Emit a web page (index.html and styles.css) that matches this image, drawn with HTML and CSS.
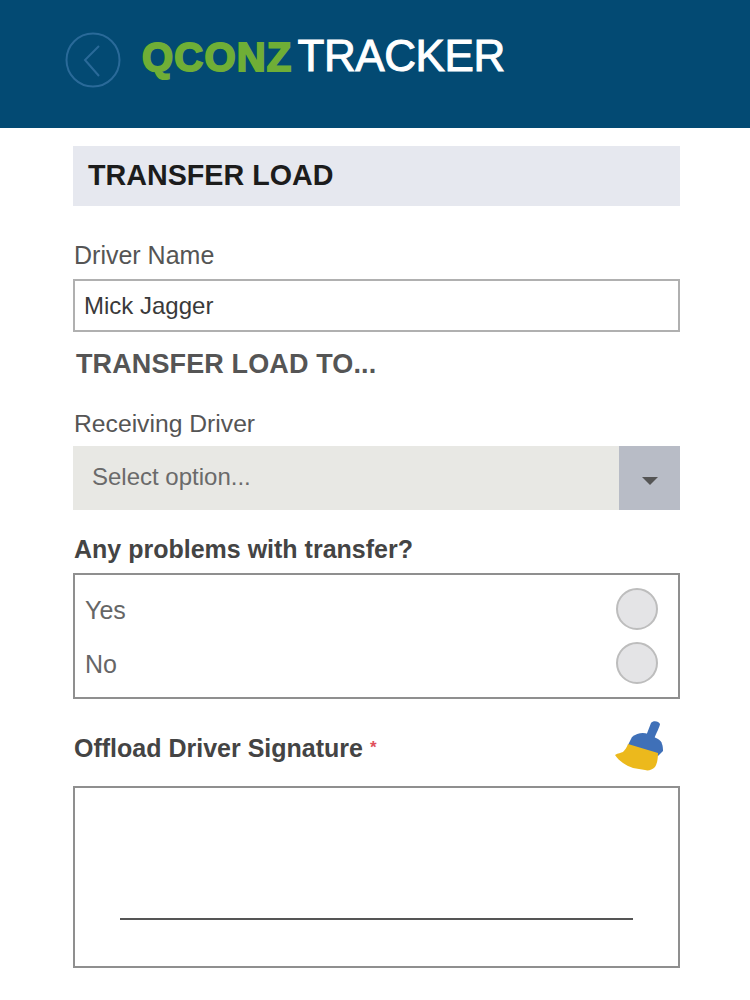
FILE: index.html
```html
<!DOCTYPE html>
<html lang="en">
<head>
    <meta charset="UTF-8">
    <meta name="viewport" content="width=device-width, initial-scale=1.0">
    <title>Transfer Load</title>
    <link rel="stylesheet" href="styles.css">
</head>
<body>

<header class="topBar">
    <svg class="backBtn" width="56" height="56" viewBox="0 0 56 56">
        <circle cx="28" cy="28" r="26.5" fill="none" stroke="#2a6a99" stroke-width="2"/>
        <path d="M34 14 L20 28 L34 44" fill="none" stroke="#2a6a99" stroke-width="2"/>
    </svg>
    <div class="logo"><span class="logoGreen">QCONZ</span><span class="logoWhite">TRACKER</span></div>
</header>

<main class="content">
    <h1 class="pageTitle">TRANSFER LOAD</h1>

    <label class="fieldLabel driverLabel" for="driverName">Driver Name</label>
    <input class="textInput" type="text" id="driverName" value="Mick Jagger">

    <h2 class="subTitle">TRANSFER LOAD TO...</h2>

    <label class="fieldLabel receivingLabel">Receiving Driver</label>
    <div class="selectBox">
        <span class="selectText">Select option...</span>
        <span class="selectArrow"><span class="arrowDown"></span></span>
    </div>

    <div class="boldLabel problemsLabel">Any problems with transfer?</div>
    <div class="radioGroup">
        <div class="radioRow"><span>Yes</span><span class="radioDot"></span></div>
        <div class="radioRow"><span>No</span><span class="radioDot"></span></div>
    </div>

    <div class="signatureHead">
        <div class="boldLabel">Offload Driver Signature <span class="required">*</span></div>
        <svg class="broom" width="48" height="52" viewBox="0 0 48 52">
            <path d="M36 3 C38 0 44 1 45 4 C45 6 41 14 39 19 L31 16 Z" fill="#3f70b8"/>
            <path d="M17 17 C22 13 28 12 33 14 L43 19 C47 21 48 26 48 31 L43 36 L13 25 Z" fill="#3f70b8"/>
            <path d="M13 24 L43 33 C43 39 42 44 40 47 C37 50 33 51 30 50 C26 49 22 49 18 48 C15 47 11 45 8 43 C5 41 2 38 0 35 C3 33 6 33 8 32 C10 30 12 27 13 24 Z" fill="#ecb91c"/>
        </svg>
    </div>
    <div class="signatureBox"><div class="signatureLine"></div></div>
</main>

</body>
</html>
```

FILE: styles.css
```css
body {
    margin: 0;
    font-family: "Liberation Sans", Arial, sans-serif;
    background-color: #fff;
    color: #4a4a4a;
}
.topBar {
    height: 128px;
    background-color: #034a73;
    display: flex;
    align-items: center;
    padding-left: 65px;
    box-sizing: border-box;
    padding-bottom: 8px;
}
.backBtn {
    flex: none;
}
.logo {
    margin-left: 21px;
    margin-top: -8px;
    display: flex;
    align-items: baseline;
    line-height: 48px;
}
.logoGreen {
    color: #6fae36;
    font-weight: bold;
    font-size: 40px;
    -webkit-text-stroke: 2px #6fae36;
    letter-spacing: 1.2px;
}
.logoWhite {
    color: #fff;
    font-size: 44px;
    margin-left: 5px;
    letter-spacing: -0.4px;
    -webkit-text-stroke: 1px #fff;
}
.content {
    margin: 18px 70px 0 73px;
}
.pageTitle {
    margin: 0;
    height: 60px;
    line-height: 58px;
    padding-left: 15px;
    background-color: #e6e8ef;
    color: #1c1c1c;
    font-size: 28.7px;
    font-weight: bold;
}
.fieldLabel {
    display: block;
    padding-left: 1px;
    font-size: 25px;
    line-height: 30px;
    color: #555;
}
.driverLabel {
    margin-top: 34px;
}
.textInput {
    display: block;
    width: 100%;
    height: 53px;
    box-sizing: border-box;
    margin-top: 9px;
    padding: 0 9px;
    border: 2px solid #b0b0b0;
    font-family: inherit;
    font-size: 24px;
    color: #3a3a3a;
    outline: none;
}
.subTitle {
    margin: 15px 0 0 3px;
    font-size: 27px;
    line-height: 34px;
    font-weight: bold;
    letter-spacing: 0.12px;
    color: #555;
}
.receivingLabel {
    margin-top: 28px;
    font-size: 24.7px;
}
.selectBox {
    display: flex;
    justify-content: space-between;
    height: 64px;
    margin-top: 7px;
    background-color: #e8e8e4;
}
.selectText {
    padding-left: 19px;
    font-size: 24px;
    line-height: 62px;
    color: #6a6a6a;
}
.selectArrow {
    width: 61px;
    background-color: #b8bcc6;
    display: flex;
    align-items: center;
    justify-content: center;
}
.arrowDown {
    width: 0;
    height: 0;
    margin-top: 6px;
    border-left: 8px solid transparent;
    border-right: 8px solid transparent;
    border-top: 8px solid #555;
}
.boldLabel {
    padding-left: 1px;
    font-size: 25px;
    line-height: 30px;
    font-weight: bold;
    color: #444;
}
.problemsLabel {
    margin-top: 24px;
}
.radioGroup {
    margin-top: 9px;
    height: 126px;
    box-sizing: border-box;
    border: 2px solid #8f8f8f;
    padding: 8px 20px 0 10px;
}
.radioRow {
    display: flex;
    align-items: center;
    justify-content: space-between;
    height: 54px;
    font-size: 25px;
    color: #666;
}
.radioDot {
    width: 42px;
    height: 42px;
    margin-bottom: 2px;
    box-sizing: border-box;
    border-radius: 50%;
    border: 2px solid #bdbdbd;
    background-color: #e4e4e6;
}
.signatureHead {
    display: flex;
    align-items: center;
    justify-content: space-between;
    height: 52px;
    margin-top: 21px;
    padding-right: 17px;
}
.signatureHead .boldLabel {
    padding-top: 3px;
}
.required {
    color: #e0505c;
    font-size: 17px;
    vertical-align: 4px;
}
.signatureBox {
    margin-top: 14px;
    height: 182px;
    box-sizing: border-box;
    border: 2px solid #8f8f8f;
    padding: 130px 45px 0 45px;
}
.signatureLine {
    height: 2px;
    background-color: #555;
}
```
